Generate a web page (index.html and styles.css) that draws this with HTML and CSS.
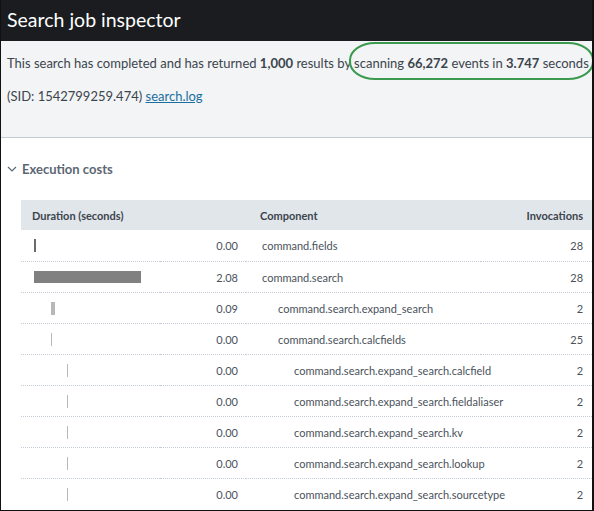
FILE: index.html
```html
<!DOCTYPE html>
<html lang="en">
<head>
    <meta charset="UTF-8">
    <link rel="stylesheet" href="styles.css">
</head>
<body>
    <div class="frame">
        <div class="title-bar">Search job inspector</div>
        <div class="summary">
            <p>This search has completed and has returned <b>1,000</b> results by <span class="circled">scanning <b>66,272</b> events in <b>3.747</b> seconds</span></p>
            <p>(SID: 1542799259.474) <a href="#">search.log</a></p>
        </div>
        <div class="section-head">
            <svg class="chevron" width="10" height="6" viewBox="0 0 10 6"><path d="M1 1 L5 5 L9 1" fill="none" stroke="#5c6773" stroke-width="1.2"/></svg>
            <span>Execution costs</span>
        </div>
        <table class="costs">
            <colgroup>
                <col class="c-bar"><col class="c-num"><col class="c-comp"><col class="c-inv">
            </colgroup>
            <thead>
                <tr>
                    <th colspan="2" class="h-dur">Duration (seconds)</th>
                    <th class="h-comp">Component</th>
                    <th class="h-inv">Invocations</th>
                </tr>
            </thead>
            <tbody>
                <tr>
                    <td class="bar-cell"><span class="bar dark" style="margin-left:0;width:2px"></span></td>
                    <td class="num">0.00</td>
                    <td class="comp">command.fields</td>
                    <td class="inv">28</td>
                </tr>
                <tr>
                    <td class="bar-cell"><span class="bar mid" style="margin-left:0;width:107px"></span></td>
                    <td class="num">2.08</td>
                    <td class="comp">command.search</td>
                    <td class="inv">28</td>
                </tr>
                <tr>
                    <td class="bar-cell"><span class="bar light" style="margin-left:17px;width:4px"></span></td>
                    <td class="num">0.09</td>
                    <td class="comp lvl1">command.search.expand_search</td>
                    <td class="inv">2</td>
                </tr>
                <tr>
                    <td class="bar-cell"><span class="bar light" style="margin-left:17px;width:1px"></span></td>
                    <td class="num">0.00</td>
                    <td class="comp lvl1">command.search.calcfields</td>
                    <td class="inv">25</td>
                </tr>
                <tr>
                    <td class="bar-cell"><span class="bar light" style="margin-left:33px;width:1px"></span></td>
                    <td class="num">0.00</td>
                    <td class="comp lvl2">command.search.expand_search.calcfield</td>
                    <td class="inv">2</td>
                </tr>
                <tr>
                    <td class="bar-cell"><span class="bar light" style="margin-left:33px;width:1px"></span></td>
                    <td class="num">0.00</td>
                    <td class="comp lvl2">command.search.expand_search.fieldaliaser</td>
                    <td class="inv">2</td>
                </tr>
                <tr>
                    <td class="bar-cell"><span class="bar light" style="margin-left:33px;width:1px"></span></td>
                    <td class="num">0.00</td>
                    <td class="comp lvl2">command.search.expand_search.kv</td>
                    <td class="inv">2</td>
                </tr>
                <tr>
                    <td class="bar-cell"><span class="bar light" style="margin-left:33px;width:1px"></span></td>
                    <td class="num">0.00</td>
                    <td class="comp lvl2">command.search.expand_search.lookup</td>
                    <td class="inv">2</td>
                </tr>
                <tr>
                    <td class="bar-cell"><span class="bar light" style="margin-left:33px;width:1px"></span></td>
                    <td class="num">0.00</td>
                    <td class="comp lvl2">command.search.expand_search.sourcetype</td>
                    <td class="inv">2</td>
                </tr>
            </tbody>
        </table>
    </div>
</body>
</html>
```

FILE: styles.css
```css
body {
    margin: 0;
    background: #fff;
    font-family: Lato, "Liberation Sans", sans-serif;
    color: #3c444d;
}
.frame {
    width: 594px;
    height: 511px;
    box-sizing: border-box;
    border-left: 1px solid #111;
    border-right: 2px solid #111;
    border-bottom: 1px solid #111;
    overflow: hidden;
}
.title-bar {
    height: 41px;
    background: #1a1c20;
    color: #fff;
    font-size: 19.5px;
    line-height: 40px;
    padding-left: 6px;
}
.summary {
    height: 97px;
    background: #f2f4f5;
    border-bottom: 1px solid #c3cbd4;
    padding: 14px 0 0 6px;
    box-sizing: border-box;
    font-size: 13px;
}
.summary p {
    margin: 0 0 16px;
    line-height: 17px;
}
.summary b {
    font-weight: 700;
}
.summary a {
    color: #1a6fa0;
    text-decoration: underline;
}
.circled {
    position: relative;
}
.circled::before {
    content: "";
    position: absolute;
    left: -5px;
    right: -5px;
    top: -13px;
    bottom: -9px;
    border: 2px solid #3b9a4e;
    border-radius: 26px / 18px;
}
.section-head {
    height: 62px;
    display: flex;
    align-items: center;
    padding-left: 6px;
    font-size: 13px;
    font-weight: 700;
    color: #5c6773;
}
.chevron {
    margin-right: 5px;
}
.costs {
    margin-left: 20px;
    width: 571px;
    border-collapse: collapse;
    table-layout: fixed;
    font-size: 11px;
    color: #4a525b;
}
.c-bar { width: 139px; }
.c-num { width: 86px; }
.c-comp { width: 235px; }
.c-inv { width: 111px; }
.costs th {
    height: 30px;
    background: #e1e6eb;
    font-size: 11px;
    font-weight: 700;
    color: #3c444d;
    text-align: left;
    padding: 0;
}
.h-dur { padding-left: 11px !important; }
.h-comp { padding-left: 14px !important; }
.h-inv { text-align: right !important; padding-right: 9px !important; }
.costs td {
    height: 30px;
    padding: 0;
    border-top: 1px dotted #c3cbd4;
}
.costs tbody tr:first-child td {
    border-top: none;
    height: 31px;
}
.bar-cell {
    padding-left: 13px !important;
}
.bar {
    display: block;
    height: 13px;
}
.bar.dark { background: #6b6b6b; }
.bar.mid { background: #808080; height: 12px; }
.bar.light { background: #b8b8b8; }
.num {
    text-align: right;
    padding-right: 8px !important;
}
.comp {
    padding-left: 16px !important;
    white-space: nowrap;
}
.comp.lvl1 { padding-left: 32px !important; }
.comp.lvl2 { padding-left: 48px !important; }
.inv {
    text-align: right;
    padding-right: 9px !important;
}
```
